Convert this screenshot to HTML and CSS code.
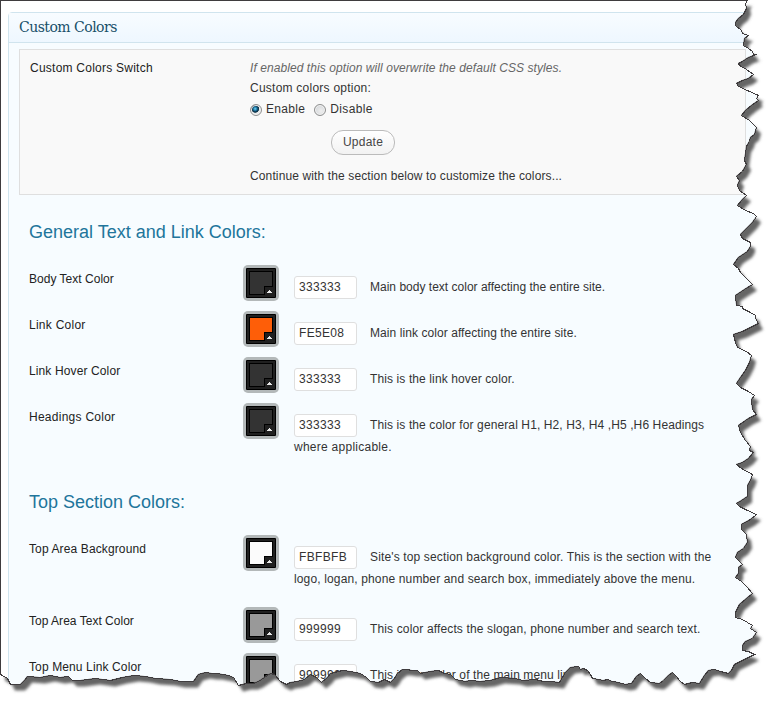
FILE: index.html
```html
<!DOCTYPE html>
<html lang="en">
<head>
<meta charset="utf-8">
<title>Custom Colors</title>
<link rel="stylesheet" href="styles.css">
</head>
<body>
<svg width="0" height="0" class="defs" aria-hidden="true">
  <symbol id="swatch" viewBox="0 0 36 36">
    <rect width="36" height="36" rx="5" fill="#b3b8b9"/>
    <rect x="3" y="3" width="30" height="30" rx="1" fill="#000"/>
    <rect x="4" y="4" width="28" height="28" fill="#202020"/>
    <rect x="6" y="6" width="24" height="24" fill="#000"/>
    <path d="M7 7H29V21H21V29H7Z" fill="currentColor"/>
    <path d="M22 22H32V32H22Z" fill="#202020"/>
    <path d="M26 25h1v1h1v1h1v1h-5v-1h1v-1h1z" fill="#e8e8e8"/>
  </symbol>
</svg>
<main class="paper">
  <section class="panel">
    <h1 class="title">Custom Colors</h1>
    <div class="switch">
      <div class="switch-label">Custom Colors Switch</div>
      <div class="switch-body">
        <p class="hint">If enabled this option will overwrite the default CSS styles.</p>
        <p class="option">Custom colors option:</p>
        <div class="choices">
          <label class="choice"><input type="radio" name="colors" checked>Enable</label>
          <label class="choice"><input type="radio" name="colors">Disable</label>
        </div>
        <button class="update">Update</button>
        <p class="continue">Continue with the section below to customize the colors...</p>
      </div>
    </div>
    <h2 class="heading">General Text and Link Colors:</h2>
    <div class="row"><span class="name snug">Body Text Color</span><svg class="swatch dark"><use href="#swatch"/></svg><div class="desc snug"><input value="333333">Main body text color affecting the entire site.</div></div>
    <div class="row"><span class="name wide">Link Color</span><svg class="swatch orange"><use href="#swatch"/></svg><div class="desc near"><input value="FE5E08">Main link color affecting the entire site.</div></div>
    <div class="row"><span class="name">Link Hover Color</span><svg class="swatch dark"><use href="#swatch"/></svg><div class="desc"><input value="333333">This is the link hover color.</div></div>
    <div class="row tall"><span class="name wide">Headings Color</span><svg class="swatch dark"><use href="#swatch"/></svg><div class="desc"><input value="333333">This is the color for general H1, H2, H3, H4 ,H5 ,H6 Headings<br><span class="wide">where applicable.</span></div></div>
    <h2 class="heading second">Top Section Colors:</h2>
    <div class="row tall"><span class="name">Top Area Background</span><svg class="swatch light"><use href="#swatch"/></svg><div class="desc loose"><input value="FBFBFB">Site's top section background color. This is the section with the<br>logo, logan, phone number and search box, immediately above the menu.</div></div>
    <div class="row"><span class="name snug">Top Area Text Color</span><svg class="swatch gray"><use href="#swatch"/></svg><div class="desc loose"><input value="999999">This color affects the slogan, phone number and search text.</div></div>
    <div class="row"><span class="name">Top Menu Link Color</span><svg class="swatch gray"><use href="#swatch"/></svg><div class="desc"><input value="999999">This is the color of the main menu links.</div></div>
  </section>
  <svg class="tear" viewBox="0 0 780 710" aria-hidden="true">
    <defs>
      <path id="sheet" d="M0 0H747L745 3 746 8 743 14 738 18 735 22 735 25 741 30 742 33 748 35 744 38 743 45 748 48 752 51 753 54 756 54 748 57 742 61 738 63 739 65 746 69 753 74 748 78 742 80 736 83 738 86 747 90 758 95 756 98 758 100 751 105 745 110 741 115 749 120 756 127 754 134 750 137 749 141 746 146 745 153 744 160 746 164 742 171 736 176 739 180 737 185 739 190 746 195 742 199 737 205 745 210 753 213 756 216 752 222 746 228 740 234 742 238 750 242 750 246 747 251 738 257 733 264 738 268 740 272 747 279 752 284 744 289 735 295 736 305 742 306 742 308 750 312 755 315 755 318 758 323 750 327 742 331 733 334 735 342 737 347 746 351 751 355 749 362 745 370 740 377 736 383 740 387 748 391 754 395 751 399 752 409 756 414 748 418 738 425 740 432 745 440 750 446 749 450 753 452 748 458 742 462 736 464 741 468 752 474 750 480 747 485 747 496 741 500 736 503 739 506 747 510 756 514 750 519 741 524 741 529 746 534 747 542 743 548 737 552 735 557 742 564 738 567 738 573 735 577 741 581 746 586 752 593 746 598 739 604 735 612 735 617 742 619 752 625 750 628 753 630 756 632 752 638 745 641 742 645 742 650 748 651 754 654 748 657 740 661 734 664 731 670 728 673 720 671 714 669 708 670 704 675 699 683 692 682 684 684 680 681 675 675 672 672 668 675 663 680 659 683 650 682 645 678 640 673 636 676 631 683 625 684 618 682 612 681 607 679 603 680 598 679 592 678 590 674 587 670 583 668 580 669 578 666 570 667 565 672 562 677 559 682 550 681 543 681 535 679 522 680 515 678 500 677 490 680 480 681 470 680 465 681 460 680 455 679 450 674 444 673 438 670 430 671 420 673 417 670 412 670 406 669 402 669 397 673 394 678 390 682 384 679 378 682 370 681 366 677 360 673 350 671 342 670 330 673 327 677 321 682 316 677 310 674 304 679 297 681 290 682 286 684 280 681 274 674 270 673 264 677 258 681 253 683 246 683 238 685 233 677 228 675 217 673 212 673 205 672 198 674 193 681 180 681 170 679 155 678 145 676 134 675 122 677 110 680 95 678 80 680 72 680 68 676 60 677 50 675 40 677 27 676 24 680 20 684 10 684 7 678 0 674Z"/>
      <mask id="outside" maskUnits="userSpaceOnUse" x="0" y="0" width="780" height="710">
        <rect width="780" height="710" fill="#fff"/><use href="#sheet" fill="#000"/>
      </mask>
      <filter id="soft" filterUnits="userSpaceOnUse" x="-20" y="-20" width="820" height="750"><feGaussianBlur stdDeviation="1.5"/></filter>
    </defs>
    <g mask="url(#outside)">
      <rect width="780" height="710" fill="#fff"/>
      <g filter="url(#soft)"><use href="#sheet" x="5" y="6.5" fill="#656565"/></g>
    </g>
    <use href="#sheet" x=".5" y=".5" class="outline"/>
  </svg>
</main>
</body>
</html>
```
FILE: styles.css
```css
* { box-sizing: border-box; }
body { margin: 0; background: #fff; color: #333; font: 12px/16px "Liberation Sans", Arial, sans-serif; }
p, h1, h2 { margin: 0; font-weight: normal; }
.defs { position: absolute; }
.paper { position: relative; width: 780px; height: 710px; padding: 12px 0 0 8px; overflow: hidden; }
.panel { width: 772px; height: 720px; border: 1px solid #d0e4ee; border-radius: 4px 0 0 0; background: #f7fcff; }
.title { height: 30px; padding-left: 10px; border-bottom: 1px solid #d0e4ee; background: linear-gradient(#f8fcff, #eef7ff); color: #174f69; font: 14px/28px "DejaVu Serif", serif; letter-spacing: -.52px; }
.switch { display: grid; grid-template-columns: 220px 1fr; width: 727px; height: 146px; margin: 6px 0 0 10px; padding: 10px; border: 1px solid #dfdfdf; background: #f9f9f9; color: #333; }
.switch-label, .name { color: #222; }
.switch-label, .option { letter-spacing: .24px; }
.name { padding-top: 6px; letter-spacing: .12px; }
.name.snug { letter-spacing: .02px; }
.wide, .name.wide { letter-spacing: .26px; }
.hint { color: #666; font-style: italic; letter-spacing: .075px; }
.option { margin-top: 4px; }
.choices { display: flex; gap: 9px; margin-top: 5px; letter-spacing: .33px; }
.choice { display: flex; gap: 4px; }
.choice input { appearance: none; width: 12px; height: 12px; margin: 3px 0 0; border: 1px solid #8e8f8f; border-radius: 50%; background: radial-gradient(circle at 60% 60%, #eee, #ccd0d4); box-shadow: inset 0 0 0 1px #f4f4f4; }
.choice input:checked { background: radial-gradient(circle at 42% 38%, #7fd8f5 0, #2587b5 1.5px, #0c344d 3px, #173d52 3.6px, #e8e8e8 4.2px); }
.update { display: block; width: 64px; height: 25px; margin: 13px 0 0 81px; padding: 0 0 2px; border: 1px solid #bbb; border-radius: 12px; background: linear-gradient(#fff, #f2f2f2); color: #464646; font: inherit; letter-spacing: .25px; }
.continue { margin-top: 13px; letter-spacing: .125px; }
.heading { margin: 25px 0 0 20px; height: 45px; color: #21759b; font-size: 18px; line-height: 24px; }
.heading.second { margin-top: 15px; height: 45px; }
.row { display: grid; grid-template-columns: 214px 36px 1fr; height: 46px; padding-left: 20px; }
.row.tall { height: 72px; }
.swatch { width: 36px; height: 36px; }
.dark { color: #333; }
.orange { color: #fe5e08; }
.light { color: #fbfbfb; }
.gray { color: #999; }
.desc { padding: 11px 0 0 15px; line-height: 22px; letter-spacing: .11px; white-space: nowrap; }
.desc.snug { letter-spacing: .01px; }
.desc.near { letter-spacing: .07px; }
.desc.loose { letter-spacing: .14px; }
.desc input { width: 63px; height: 23px; margin: -1px 13px -1px 0; padding: 0 4px 1px; border: 1px solid #dfdfdf; border-radius: 3px; background: #fff; color: #333; font: inherit; letter-spacing: .33px; line-height: 20px; vertical-align: middle; }
.tear { position: absolute; inset: 0; width: 780px; height: 710px; pointer-events: none; }
.outline { fill: none; stroke: #3f3c3e; stroke-width: 1; shape-rendering: crispEdges; }
```
